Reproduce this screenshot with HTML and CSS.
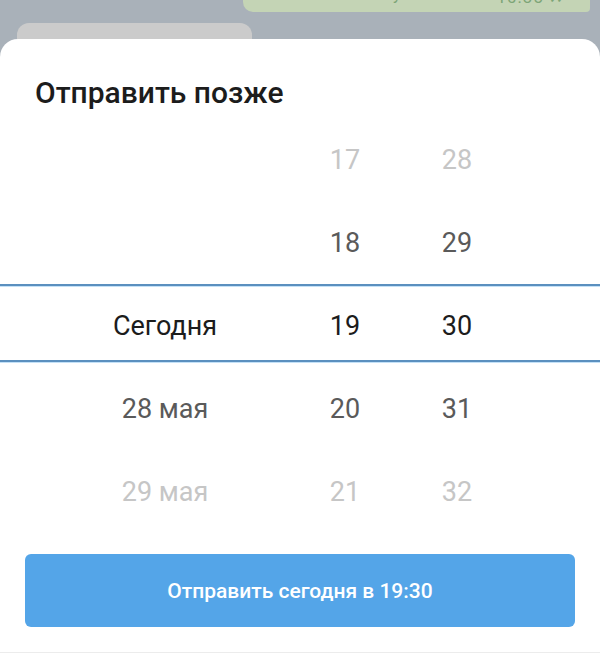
FILE: index.html
```html
<!DOCTYPE html>
<html lang="ru">
<head>
<meta charset="utf-8">
<title>Отправить позже</title>
<link rel="stylesheet" href="styles.css">
</head>
<body>
<div class="chat">
  <div class="bubble-out">
    <span class="bubble-text">у</span>
    <span class="bubble-time">10:35 <span class="checks">✓✓</span></span>
  </div>
  <div class="bubble-in"></div>
</div>
<div class="sheet">
  <h1 class="title">Отправить позже</h1>
  <div class="picker">
    <div class="wheel wheel-date">
      <div class="item far"></div>
      <div class="item near"></div>
      <div class="item sel">Сегодня</div>
      <div class="item near">28 мая</div>
      <div class="item far">29 мая</div>
    </div>
    <div class="wheel wheel-hour">
      <div class="item far">17</div>
      <div class="item near">18</div>
      <div class="item sel">19</div>
      <div class="item near">20</div>
      <div class="item far">21</div>
    </div>
    <div class="wheel wheel-min">
      <div class="item far">28</div>
      <div class="item near">29</div>
      <div class="item sel">30</div>
      <div class="item near">31</div>
      <div class="item far">32</div>
    </div>
    <div class="selection"></div>
  </div>
  <div class="actions">
    <button class="send-btn">Отправить сегодня в 19:30</button>
  </div>
</div>
</body>
</html>
```
FILE: styles.css
```css
html, body {
  margin: 0;
  padding: 0;
}
body {
  width: 600px;
  height: 653px;
  overflow: hidden;
  background: #a9b1b9;
  font-family: Roboto, "Noto Sans", "Liberation Sans", sans-serif;
}
.chat {
  height: 39px;
  overflow: hidden;
  position: relative;
}
.bubble-out {
  margin: -14px 10px 0 243px;
  height: 26px;
  background: #c4d4b5;
  border-radius: 0 0 4px 10px;
  display: flex;
  align-items: flex-end;
  color: #7da577;
  font-size: 17px;
  line-height: 20px;
}
.bubble-text {
  margin-left: 150px;
  margin-bottom: 8px;
}
.bubble-time {
  margin-left: auto;
  margin-right: 27px;
  margin-bottom: 3px;
  letter-spacing: 1px;
}
.checks {
  font-size: 13px;
  letter-spacing: -4px;
}
.bubble-in {
  margin: 11px 0 0 17px;
  width: 235px;
  height: 30px;
  background: #cbcbcb;
  border-radius: 12px 12px 0 0;
}
.sheet {
  background: #fff;
  border-radius: 18px 18px 0 0;
  height: 614px;
  display: flex;
  flex-direction: column;
  border-bottom: 1px solid #ececec;
  box-sizing: border-box;
}
.title {
  margin: 0;
  padding: 34px 0 0 35px;
  height: 79px;
  box-sizing: border-box;
  font-size: 30px;
  font-weight: 500;
  color: #1c1c1c;
  line-height: 40px;
}
.picker {
  position: relative;
  display: flex;
}
.wheel {
  display: flex;
  flex-direction: column;
}
.wheel-date { width: 330px; }
.wheel-hour { width: 30px; }
.wheel-min { width: 194px; }
.item {
  height: 83px;
  display: flex;
  align-items: center;
  justify-content: center;
  white-space: nowrap;
  font-size: 27px;
  color: #555;
}
.item.sel { color: #1c1c1c; }
.item.near { color: #5a5a5a; }
.item.far { color: #c6c6c6; }
.selection {
  position: absolute;
  left: 0;
  right: 0;
  top: 166px;
  height: 74px;
  border-top: 2px solid #5b90bf;
  border-bottom: 2px solid #5b90bf;
  box-shadow: inset 0 1px 0 #c4e1f7, 0 1px 0 #c4e1f7;
  pointer-events: none;
}
.actions {
  padding: 21px 25px 0 25px;
}
.send-btn {
  display: block;
  width: 100%;
  height: 73px;
  border: none;
  border-radius: 6px;
  background: #54a5e8;
  color: #fff;
  font-family: Roboto, "Noto Sans", "Liberation Sans", sans-serif;
  font-size: 21px;
  font-weight: 500;
}
```
